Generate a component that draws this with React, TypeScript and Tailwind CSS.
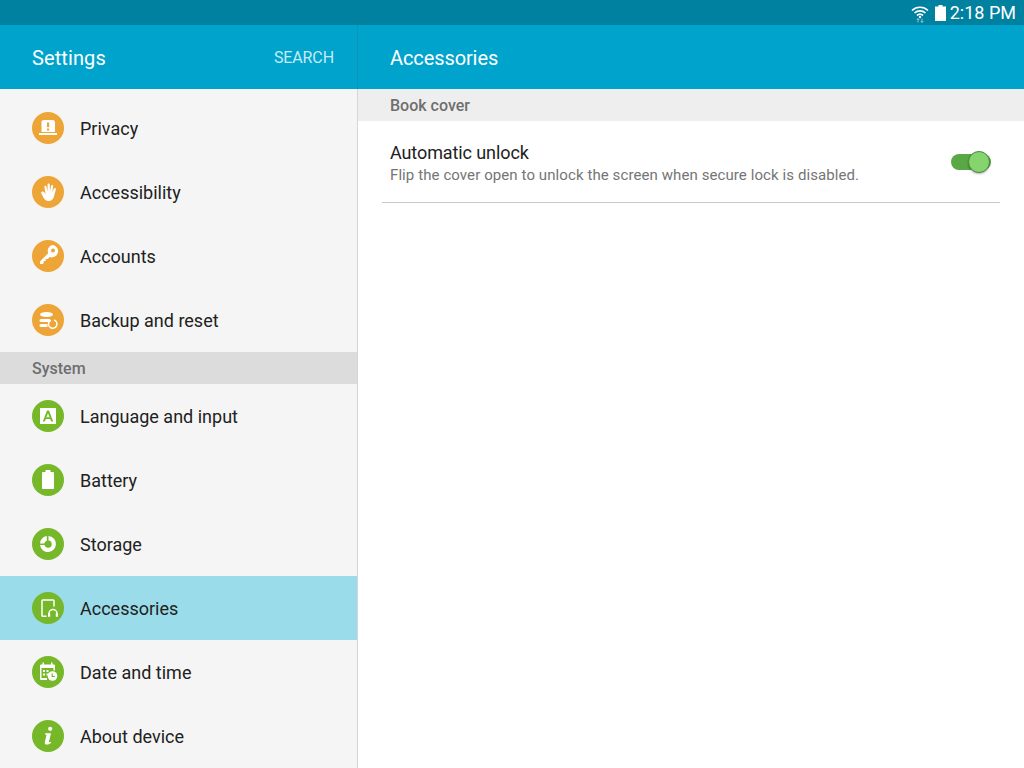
import type { ReactNode } from "react";

const orange = "bg-[#eea537]";
const green = "bg-[#76b82a]";

function Privacy() {
  return (
    <svg viewBox="0 0 32 32" className="w-8 h-8">
      <path d="M11 8h10.500l1.500 1.500V20H9.500V9.500z" fill="#fff" />
      <path d="M15 10.500h2.200v4.800H15zM15 16.500h2.200v2H15z" fill="#eea537" />
      <path d="M7 21h18v2H7z" fill="#fff" />
    </svg>
  );
}

function Hand() {
  return (
    <svg viewBox="0 0 32 32" className="w-8 h-8">
      <path
        d="M9.500 16l1-.5c.6-.2 1.200 0 1.600.6l1.600 2.400-1.300-7.500c-.2-1.500 1.800-1.800 2.100-.3l1 4.800.1-6.800c0-1.500 2.100-1.500 2.100 0l.3 6.900 1-5.700c.3-1.400 2.300-1.100 2.100.3l-.8 6.400 1.500-3.800c.6-1.300 2.400-.7 2 .6l-1.700 6.500c-.8 3.300-2.600 5-5.500 5-2.600 0-4.100-1.100-5.100-3.100L9.200 17.300c-.3-.6-.2-1 .3-1.300z"
        fill="#fff"
      />
    </svg>
  );
}

function Key() {
  return (
    <svg viewBox="0 0 32 32" className="w-8 h-8">
      <path
        d="M20 5a6.200 6.200 0 1 1-2.300 12l-2 2h-2v2h-2v2l-1 1H8v-2.600l8.200-8.200A6.200 6.200 0 0 1 20 5z"
        fill="#fff"
      />
      <circle cx="21" cy="10.500" r="2" fill="#eea537" />
    </svg>
  );
}

function Backup() {
  return (
    <svg viewBox="0 0 32 32" className="w-8 h-8">
      <ellipse cx="14.500" cy="10.500" rx="6.500" ry="2.600" fill="#fff" />
      <path d="M9 15h9v3H9a1.500 1.500 0 0 1 0-3zM9 20h6.500v3H9a1.500 1.500 0 0 1 0-3z" fill="#fff" />
      <circle cx="20.700" cy="20" r="4.200" fill="none" stroke="#fff" strokeWidth="1.600" strokeDasharray="22.500 3.900" transform="rotate(-70 20.700 20)" />
    </svg>
  );
}

function Language() {
  return (
    <svg viewBox="0 0 32 32" className="w-8 h-8">
      <path d="M8 8h16v16H8z" fill="#fff" />
      <path d="M15 10.500h2l4.200 11h-2l-1-2.600h-4.400l-1 2.600h-2zm1 2.700l-1.600 4h3.200z" fill="#76b82a" />
    </svg>
  );
}

function BatteryIcon() {
  return (
    <svg viewBox="0 0 32 32" className="w-8 h-8">
      <path d="M13.500 6h5v2h2.700a.8.800 0 0 1 .8.800v15.400a.8.800 0 0 1-.8.800H10.800a.8.800 0 0 1-.8-.8V8.800a.8.800 0 0 1 .8-.8h2.700z" fill="#fff" />
    </svg>
  );
}

function StorageIcon() {
  return (
    <svg viewBox="0 0 32 32" className="w-8 h-8">
      <path d="M16.500 8a8 8 0 1 1-8.500 9h4.600a3.600 3.600 0 1 0 3.900-4.400z" fill="#fff" />
      <path d="M14.800 8.100v4.600a3.800 3.800 0 0 0-2.600 2.800H8a8 8 0 0 1 6.800-7.400z" fill="#fff" />
    </svg>
  );
}

function AccessoriesIcon() {
  return (
    <svg viewBox="0 0 32 32" className="w-8 h-8">
      <path d="M14.500 24.200h-3.700a.8.800 0 0 1-.8-.8V8.800a.8.800 0 0 1 .8-.8h10.400a.8.800 0 0 1 .8.800v5.700" fill="none" stroke="#fff" strokeWidth="1.500" />
      <path d="M17 24v-2.500a4 4 0 0 1 8 0V24" fill="none" stroke="#fff" strokeWidth="1.500" />
      <path d="M16 21.500h2.200v3.200H16zM23.800 21.500H26v3.200h-2.200z" fill="#fff" />
    </svg>
  );
}

function DateIcon() {
  return (
    <svg viewBox="0 0 32 32" className="w-8 h-8">
      <path d="M10.500 6.500h1.500v2h7v-2h1.500v2h1.500a1 1 0 0 1 1 1v5h-1.500v-2.500H9.500v10h5.500V24H9a1 1 0 0 1-1-1V9.500a1 1 0 0 1 1-1h1.500z" fill="#fff" />
      <path d="M11 14h2v2h-2zM14.500 14h2v2h-2zM11 17.500h2v2h-2zM14.500 17.500h2v2h-2z" fill="#fff" />
      <circle cx="20.500" cy="20" r="4.800" fill="#fff" />
      <path d="M20.200 17.500v3h2.800" fill="none" stroke="#76b82a" strokeWidth="1.200" />
    </svg>
  );
}

function InfoIcon() {
  return (
    <svg viewBox="0 0 32 32" className="w-8 h-8">
      <circle cx="18.200" cy="8.800" r="2.100" fill="#fff" />
      <path d="M13.200 13.300h5.800l-2 8.300c-.2.800.4 1 1.900.2l.4.900c-1.600 1.300-3.200 1.900-4.600 1.900-1.500 0-2.200-.9-1.900-2.200l1.700-7.600-1.500-.4z" fill="#fff" />
    </svg>
  );
}

type Item = { label: string; color: string; icon: ReactNode; active?: boolean };

const personal: Item[] = [
  { label: "Privacy", color: orange, icon: <Privacy /> },
  { label: "Accessibility", color: orange, icon: <Hand /> },
  { label: "Accounts", color: orange, icon: <Key /> },
  { label: "Backup and reset", color: orange, icon: <Backup /> },
];

const system: Item[] = [
  { label: "Language and input", color: green, icon: <Language /> },
  { label: "Battery", color: green, icon: <BatteryIcon /> },
  { label: "Storage", color: green, icon: <StorageIcon /> },
  { label: "Accessories", color: green, icon: <AccessoriesIcon />, active: true },
  { label: "Date and time", color: green, icon: <DateIcon /> },
  { label: "About device", color: green, icon: <InfoIcon /> },
];

function Row({ item }: { item: Item }) {
  return (
    <div className={`h-16 flex items-center pl-8 gap-4 ${item.active ? "bg-[#9adce9]" : ""}`}>
      <div className={`w-8 h-8 rounded-full ${item.color}`}>{item.icon}</div>
      <span className="text-[18px] text-[#212121]">{item.label}</span>
    </div>
  );
}

export default function App() {
  return (
    <div className="w-[1024px] h-[768px] overflow-hidden flex flex-col bg-white font-['Roboto',sans-serif]">
      {/* Status bar */}
      <div className="h-[25px] bg-[#00819f] flex items-center justify-end pr-2 text-white">
        <svg viewBox="0 0 20 20" className="w-5 h-5 mr-[5px]">
          <path d="M2 7.500a11.500 11.500 0 0 1 16 0M4.500 10a8 8 0 0 1 11 0M7 12.500a4.500 4.500 0 0 1 6 0" fill="none" stroke="#fff" strokeWidth="1.700" />
          <circle cx="10" cy="14" r="1.200" fill="#fff" />
          <path d="M8 15.500v4M9.300 17l-1.300-1.500L6.700 17M12 19.500v-4M10.700 18l1.300 1.500 1.300-1.500" fill="none" stroke="#8fd0e0" strokeWidth="0.900" />
        </svg>
        <svg viewBox="0 0 11 16" className="w-[11px] h-4 mr-[4px]">
          <path d="M3.500 0h4v1.500H11V16H0V1.500h3.500z" fill="#fff" />
        </svg>
        <span className="text-[18px] leading-none">2:18 PM</span>
      </div>

      {/* App bar */}
      <div className="h-16 bg-[#00a3cc] flex items-center text-white">
        <div className="w-[358px] flex items-center justify-between pl-8 pr-[23px] pt-[2px] border-r border-[#0c93b5] h-full">
          <span className="text-[20px] tracking-[0.1px]">Settings</span>
          <span className="text-[16px] tracking-[-0.1px] text-[#c5ecf5]">SEARCH</span>
        </div>
        <span className="pl-8 pt-[2px] text-[20px] tracking-[-0.1px]">Accessories</span>
      </div>

      <div className="flex-1 flex min-h-0">
        {/* Sidebar */}
        <div className="w-[358px] bg-[#f5f5f5] border-r border-[#d6d6d6] pt-[7px]">
          {personal.map((item) => (
            <Row key={item.label} item={item} />
          ))}
          <div className="h-8 bg-[#dcdcdc] pl-8 pt-[1px] flex items-center text-[16px] font-medium text-[#6e6e6e]">System</div>
          {system.map((item) => (
            <Row key={item.label} item={item} />
          ))}
        </div>

        {/* Detail pane */}
        <div className="flex-1">
          <div className="h-8 bg-[#eeeeee] pl-8 pt-[1px] flex items-center text-[16px] font-medium text-[#6e6e6e]">Book cover</div>
          <div className="mx-6 h-[82px] border-b border-[#c8c8c8] pl-2 pr-[9px] pt-[4px] flex items-center justify-between">
            <div>
              <div className="text-[18px] leading-[22px] tracking-[-0.1px] text-[#212121]">Automatic unlock</div>
              <div className="text-[15px] leading-[22px] tracking-[0.09px] text-[#757575]">Flip the cover open to unlock the screen when secure lock is disabled.</div>
            </div>
            <div className="relative -top-[2px] w-10 h-4 rounded-full bg-[#5aa845]">
              <div className="absolute right-[1px] -top-[3px] w-[22px] h-[22px] rounded-full bg-[#86d46e] border border-[#4c8a3c] shadow-[0_1px_2px_rgba(0,0,0,0.3)]" />
            </div>
          </div>
        </div>
      </div>
    </div>
  );
}
